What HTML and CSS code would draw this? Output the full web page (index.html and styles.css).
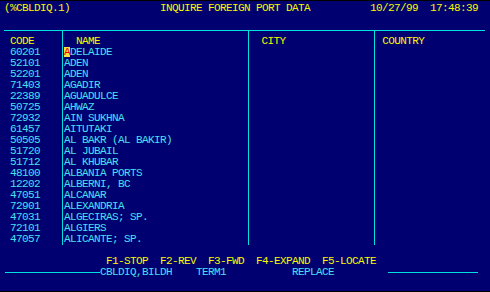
FILE: index.html
```html
<!DOCTYPE html>
<html>
<head>
<meta charset="utf-8">
<link rel="stylesheet" href="styles.css">
</head>
<body>
<div class="screen">
  <div class="line title">(%CBLDIQ.1)               INQUIRE FOREIGN PORT DATA          10/27/99  17:48:39</div>
  <div class="table">
    <div class="col col-code">
      <div class="line head">CODE</div>
      <div class="line cell">60201</div>
      <div class="line cell">52101</div>
      <div class="line cell">52201</div>
      <div class="line cell">71403</div>
      <div class="line cell">22389</div>
      <div class="line cell">50725</div>
      <div class="line cell">72932</div>
      <div class="line cell">61457</div>
      <div class="line cell">50505</div>
      <div class="line cell">51720</div>
      <div class="line cell">51712</div>
      <div class="line cell">48100</div>
      <div class="line cell">12202</div>
      <div class="line cell">47051</div>
      <div class="line cell">72901</div>
      <div class="line cell">47031</div>
      <div class="line cell">72101</div>
      <div class="line cell">47057</div>
    </div>
    <div class="col col-name">
      <div class="line head">  NAME</div>
      <div class="line cell"><span class="cursor">A</span>DELAIDE</div>
      <div class="line cell">ADEN</div>
      <div class="line cell">ADEN</div>
      <div class="line cell">AGADIR</div>
      <div class="line cell">AGUADULCE</div>
      <div class="line cell">AHWAZ</div>
      <div class="line cell">AIN SUKHNA</div>
      <div class="line cell">AITUTAKI</div>
      <div class="line cell">AL BAKR (AL BAKIR)</div>
      <div class="line cell">AL JUBAIL</div>
      <div class="line cell">AL KHUBAR</div>
      <div class="line cell">ALBANIA PORTS</div>
      <div class="line cell">ALBERNI, BC</div>
      <div class="line cell">ALCANAR</div>
      <div class="line cell">ALEXANDRIA</div>
      <div class="line cell">ALGECIRAS; SP.</div>
      <div class="line cell">ALGIERS</div>
      <div class="line cell">ALICANTE; SP.</div>
    </div>
    <div class="col col-city">
      <div class="line head">  CITY</div>
    </div>
    <div class="col col-country">
      <div class="line head">  COUNTRY</div>
    </div>
  </div>
  <div class="line keys">                 F1-STOP  F2-REV  F3-FWD  F4-EXPAND  F5-LOCATE</div>
  <div class="status">
    <span class="rule rule-left"></span>
    <span class="line status-text">CBLDIQ,BILDH    TERM1           REPLACE         </span>
    <span class="rule rule-right"></span>
  </div>
</div>
</body>
</html>
```
FILE: styles.css
```css
html, body {
  margin: 0;
  padding: 0;
  background: #000070;
}

.screen {
  box-sizing: border-box;
  width: 490px;
  height: 292px;
  background: #000070;
  border-top: 1px solid #000;
  border-bottom: 1px solid #000;
  padding: 2px 0 0 4px;
  font-family: "Liberation Mono", "DejaVu Sans Mono", monospace;
  font-size: 11px;
  letter-spacing: -0.6px;
}

.line {
  height: 11px;
  line-height: 11px;
  white-space: pre;
}

.title,
.head,
.keys {
  color: #f8f800;
}

.cell,
.status-text {
  color: #48e0f0;
}

.table {
  display: flex;
  width: 481px;
  margin-top: 16px;
  border-top: 1px solid #00e0e0;
  padding-top: 5px;
}

.col + .col {
  border-left: 1px solid #00e0e0;
  margin-top: -5px;
  padding-top: 5px;
}

.col-code {
  width: 52px;
  padding-left: 6px;
}

.col-name {
  width: 184px;
  padding-left: 1px;
}

.col-city {
  width: 125px;
  padding-left: 1px;
}

.col-country {
  width: 109px;
  padding-left: 1px;
}

.col-country .head {
  margin-left: -6px;
}

.cursor {
  display: inline-block;
  width: 6px;
  height: 10px;
  line-height: 10px;
  vertical-align: top;
  background: #f8e040;
  color: #e00000;
}

.keys {
  margin-top: 11px;
}

.status {
  display: flex;
  align-items: center;
  height: 11px;
}

.rule {
  display: block;
  height: 0;
  border-top: 1px solid #00e0e0;
}

.rule-left {
  width: 95px;
  margin-left: 1px;
}

.rule-right {
  width: 90px;
}
```
